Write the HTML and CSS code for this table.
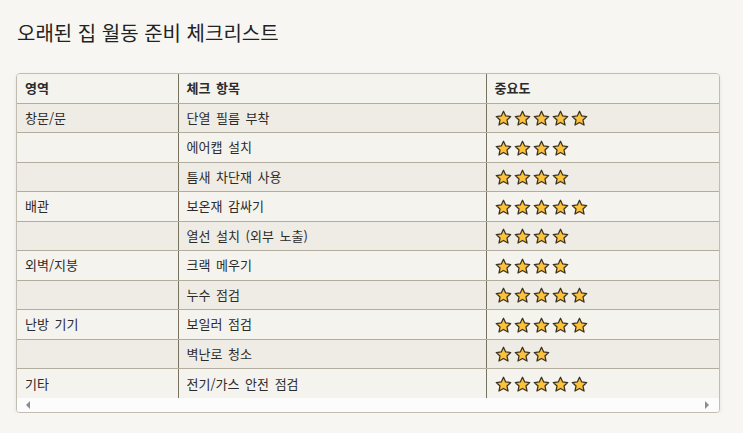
FILE: index.html
```html
<!DOCTYPE html>
<html lang="ko">
<head>
<meta charset="utf-8">
<link rel="stylesheet" href="styles.css">
</head>
<body>
<svg width="0" height="0" class="defs">
  <defs>
    <symbol id="star" viewBox="0 0 24 24">
      <path d="M12 1.8l3.1 6.6 7.1.8-5.3 4.9 1.5 7.1L12 17.6l-6.4 3.6 1.5-7.1-5.3-4.9 7.1-.8z" fill="#fcc33a" stroke="#3b3222" stroke-width="1.8" stroke-linejoin="round"/>
    </symbol>
  </defs>
</svg>
<h1 class="title">오래된 집 월동 준비 체크리스트</h1>
<div class="wrap">
  <table class="tbl">
    <thead>
      <tr><th class="c1">영역</th><th class="c2">체크 항목</th><th class="c3">중요도</th></tr>
    </thead>
    <tbody id="rows"></tbody>
  </table>
  <div class="hscroll">
    <span class="arrow left"></span>
    <span class="arrow right"></span>
  </div>
</div>
<script src="app.js"></script>
</body>
</html>
```
FILE: app.js
```js
const data = [
  ["창문/문", "단열 필름 부착", 5],
  ["", "에어캡 설치", 4],
  ["", "틈새 차단재 사용", 4],
  ["배관", "보온재 감싸기", 5],
  ["", "열선 설치 (외부 노출)", 4],
  ["외벽/지붕", "크랙 메우기", 4],
  ["", "누수 점검", 5],
  ["난방 기기", "보일러 점검", 5],
  ["", "벽난로 청소", 3],
  ["기타", "전기/가스 안전 점검", 5]
];
const tb = document.getElementById("rows");
data.forEach(([a, b, n]) => {
  const tr = document.createElement("tr");
  let stars = "";
  for (let i = 0; i < n; i++) stars += '<svg class="star"><use href="#star"/></svg>';
  tr.innerHTML = `<td>${a}</td><td>${b}</td><td><span class="stars">${stars}</span></td>`;
  tb.appendChild(tr);
});
```
FILE: styles.css
```css
html, body { margin: 0; padding: 0; }
body {
  background: #f7f6f2;
  font-family: "Noto Sans CJK KR", "Noto Sans", sans-serif;
  color: #2b2b2b;
  padding: 16px 23px 0 16px;
}
.defs { position: absolute; }
.title {
  font-family: "Noto Sans CJK KR", sans-serif;
  font-size: 20px;
  font-weight: 400;
  margin: 0 0 0 1px;
  line-height: 34px;
  color: #222;
}
.wrap {
  margin-top: 23px;
  border: 1px solid #c2bdb2;
  border-radius: 4px;
  overflow: hidden;
  background: #fcfcfb;
  box-shadow: 0 2px 4px rgba(0,0,0,0.08);
}
.tbl {
  border-collapse: collapse;
  width: 100%;
  font-size: 13px;
  word-spacing: 2px;
}
.tbl th, .tbl td {
  height: 29.5px;
  padding: 0 8px;
  text-align: left;
  border-bottom: 1px solid #b3ad9f;
  border-right: 1px solid #77715f;
  line-height: 18px;
  box-sizing: border-box;
}
.tbl th { height: 29px; font-weight: 700; background: #f5f3ee; }
.tbl th:last-child, .tbl td:last-child { border-right: none; }
.tbl tbody tr:last-child td { border-bottom: none; }
.c1 { width: 161px; }
.c2 { width: 308px; }
.tbl tbody tr:nth-child(odd) td { background: #efece5; }
.tbl tbody tr:nth-child(even) td { background: #f5f3ee; }
.stars { display: inline-flex; gap: 2px; vertical-align: middle; }
.star { width: 17px; height: 17px; display: block; }
.hscroll {
  height: 14px;
  background: #fcfcfc;
  display: flex;
  justify-content: space-between;
  align-items: center;
  padding: 0 10px 0 9px;
}
.arrow { width: 0; height: 0; border-top: 4px solid transparent; border-bottom: 4px solid transparent; }
.arrow.left { border-right: 4px solid #8c8c8c; }
.arrow.right { border-left: 4px solid #8c8c8c; }
```
